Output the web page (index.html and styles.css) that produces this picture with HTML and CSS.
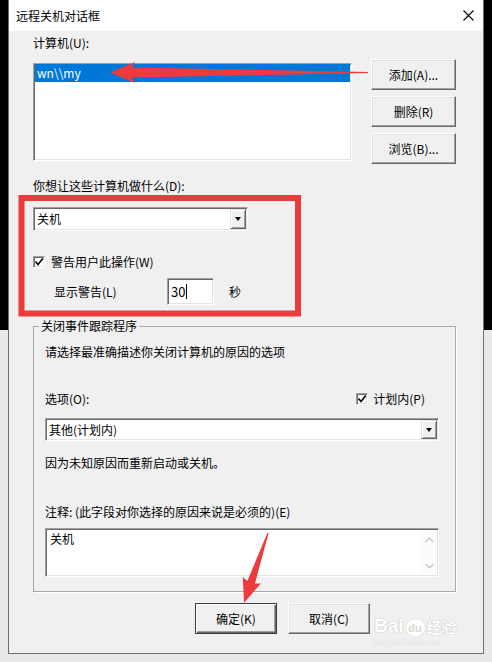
FILE: index.html
```html
<!DOCTYPE html>
<html lang="zh-CN">
<head>
    <meta charset="UTF-8">
    <title>远程关机对话框</title>
    <link rel="stylesheet" href="styles.css">
</head>
<body>
    <div class="dialog">
        <div class="titlebar">
            <span class="title">远程关机对话框</span>
            <svg class="close" width="11" height="11" viewBox="0 0 11 11">
                <path d="M0.5 0.5 L10.5 10.5 M10.5 0.5 L0.5 10.5" stroke="#000" stroke-width="1.1" fill="none"/>
            </svg>
        </div>
        <div class="content">
            <div class="label">计算机(U):</div>
            <div class="computers">
                <div class="listbox sunken">
                    <div class="list-item selected">wn\\my</div>
                </div>
                <div class="side-buttons">
                    <button class="btn">添加(A)...</button>
                    <button class="btn">删除(R)</button>
                    <button class="btn">浏览(B)...</button>
                </div>
            </div>

            <div class="label label-action">你想让这些计算机做什么(D):</div>
            <div class="combo combo-action sunken">
                <span class="combo-text">关机</span>
                <span class="combo-btn"><i class="tri"></i></span>
            </div>
            <div class="check-row warn-row">
                <span class="checkbox sunken">
                    <svg width="10" height="10" viewBox="0 0 10 10"><path d="M1.5 4.5 L4 7.5 L8.8 1.5" stroke="#000" stroke-width="1.6" fill="none"/></svg>
                </span>
                <span>警告用户此操作(W)</span>
            </div>
            <div class="timeout-row">
                <span class="timeout-label">显示警告(L)</span>
                <span class="textbox sunken">30<span class="caret"></span></span>
                <span class="unit">秒</span>
            </div>

            <div class="group">
                <span class="group-title">关闭事件跟踪程序</span>
                <div class="group-hint">请选择最准确描述你关闭计算机的原因的选项</div>
                <div class="option-row">
                    <span>选项(O):</span>
                    <span class="check-row planned">
                        <span class="checkbox sunken">
                            <svg width="10" height="10" viewBox="0 0 10 10"><path d="M1.5 4.5 L4 7.5 L8.8 1.5" stroke="#000" stroke-width="1.6" fill="none"/></svg>
                        </span>
                        <span>计划内(P)</span>
                    </span>
                </div>
                <div class="combo combo-reason sunken">
                    <span class="combo-text">其他(计划内)</span>
                    <span class="combo-btn"><i class="tri"></i></span>
                </div>
                <div class="reason-desc">因为未知原因而重新启动或关机。</div>
                <div class="comment-label">注释: (此字段对你选择的原因来说是必须的)(E)</div>
                <div class="memo sunken">
                    <span class="memo-text">关机</span>
                    <span class="memo-scroll">
                        <svg width="9" height="6" viewBox="0 0 9 6"><path d="M0.5 5 L4.5 1 L8.5 5" stroke="#c4c4c4" stroke-width="1.2" fill="none"/></svg>
                        <svg width="9" height="6" viewBox="0 0 9 6"><path d="M0.5 1 L4.5 5 L8.5 1" stroke="#c4c4c4" stroke-width="1.2" fill="none"/></svg>
                    </span>
                </div>
            </div>

            <div class="footer">
                <button class="btn btn-default">确定(K)</button>
                <button class="btn btn-cancel">取消(C)</button>
            </div>
        </div>
    </div>

    <!-- red annotations drawn over the screenshot -->
    <svg class="annotations" width="492" height="662" viewBox="0 0 492 662">
        <rect x="21.5" y="198" width="276.5" height="115.5" fill="none" stroke="#ec3b3d" stroke-width="6"/>
        <polygon transform="translate(368 72.5) rotate(180)" fill="#ec3b3d"
            points="0,-0.6 236,-5 233,-10.5 258,0 233,10.5 236,5 0,0.6"/>
        <polygon transform="translate(268 533) rotate(108.9)" fill="#ec3b3d"
            points="0,-0.6 52,-4 50,-9.5 74,0 50,9.5 52,4 0,0.6"/>
    </svg>

    <div class="watermark">
        <div class="wm-main">
            <span class="wm-bai">Bai</span>
            <span class="wm-paw">du</span>
            <span class="wm-jy">经验</span>
        </div>
        <div class="wm-url">jingyan.baidu.com</div>
    </div>
</body>
</html>
```

FILE: styles.css
```css
body {
    margin: 0;
    width: 492px;
    height: 662px;
    overflow: hidden;
    position: relative;
    background: linear-gradient(#000 0 330px, #e8e8e8 330px);
    font-family: "Noto Sans CJK SC", "Noto Sans", sans-serif;
    font-size: 12px;
    line-height: 16px;
    color: #000;
}
.dialog {
    margin-left: 8px;
    width: 476px;
    height: 654px;
    box-sizing: border-box;
    background: #f0f0f0;
    border: 1px solid #6f6f6f;
    border-top: none;
    display: flex;
    flex-direction: column;
}
.titlebar {
    height: 31px;
    background: #fff;
    display: flex;
    align-items: center;
    justify-content: space-between;
    padding: 0 9px 0 7px;
}
.close {
    display: block;
}
.content {
    padding: 4px 0 0 24px;
}

/* classic sunken edge */
.sunken {
    box-sizing: border-box;
    background: #fff;
    border: 1px solid;
    border-color: #a0a0a0 #fff #fff #a0a0a0;
    box-shadow: inset 1px 1px 0 #696969, inset -1px -1px 0 #e3e3e3;
}

.computers {
    display: flex;
    margin-top: 8px;
}
.listbox {
    width: 319px;
    height: 98px;
    margin-top: 4px;
    padding: 0 1px 0 1px;
}
.list-item {
    height: 18px;
    line-height: 18px;
    padding-left: 2px;
}
.list-item.selected {
    background: #0078d7;
    color: #fff;
}
.side-buttons {
    margin-left: 19px;
    display: flex;
    flex-direction: column;
    gap: 6px;
}
.btn {
    width: 85px;
    height: 31px;
    box-sizing: border-box;
    padding: 0;
    font: inherit;
    color: #000;
    background: #f0f0f0;
    border: 1px solid;
    border-color: #fff #696969 #696969 #fff;
    box-shadow: inset -1px -1px 0 #a0a0a0, inset 1px 1px 0 #e3e3e3;
}
.btn-default {
    border: 1px solid #3c3c3c;
    box-shadow: inset 1px 1px 0 #fff, inset -1px -1px 0 #696969, inset -2px -2px 0 #a0a0a0;
}

.label-action {
    margin-top: 14px;
}
.combo {
    display: flex;
    align-items: stretch;
    padding: 1px;
}
.combo-action {
    margin-top: 13px;
    width: 215px;
    height: 24px;
}
.combo-text {
    flex: 1;
    padding-left: 2px;
    line-height: 20px;
}
.combo-btn {
    width: 16px;
    box-sizing: border-box;
    background: #f0f0f0;
    border: 1px solid;
    border-color: #e3e3e3 #696969 #696969 #e3e3e3;
    box-shadow: inset 1px 1px 0 #fff, inset -1px -1px 0 #a0a0a0;
    display: flex;
    align-items: center;
    justify-content: center;
}
.tri {
    width: 0;
    height: 0;
    border-left: 3.5px solid transparent;
    border-right: 3.5px solid transparent;
    border-top: 4px solid #000;
}

.check-row {
    display: flex;
    align-items: center;
}
.checkbox {
    width: 12px;
    height: 12px;
    display: flex;
    align-items: center;
    justify-content: center;
}
.warn-row {
    margin-top: 23px;
    height: 16px;
    gap: 6px;
}
.timeout-row {
    margin-top: 8px;
    height: 27px;
    display: flex;
    align-items: center;
}
.timeout-label {
    width: 113px;
    padding-left: 21px;
}
.textbox {
    width: 47px;
    height: 27px;
    padding-left: 3px;
    display: flex;
    align-items: center;
    font-size: 13px;
}
.caret {
    width: 1px;
    height: 15px;
    background: #000;
    margin-left: 1px;
}
.unit {
    margin-left: 15px;
}

.group {
    margin-top: 21px;
    width: 423px;
    box-sizing: border-box;
    border: 1px solid #a9a9a9;
    box-shadow: 1px 1px 0 #fff;
    padding: 0 16px 14px 11px;
}
.group-title {
    display: block;
    width: fit-content;
    margin: -9px 0 0 -6px;
    padding: 0 2px;
    background: #f0f0f0;
}
.group-hint {
    margin-top: 10px;
}
.option-row {
    margin-top: 31px;
    height: 16px;
    display: flex;
    align-items: center;
    justify-content: space-between;
}
.planned {
    gap: 5px;
    margin-right: 14px;
}
.combo-reason {
    margin-top: 11px;
    height: 23px;
}
.combo-reason .combo-text {
    line-height: 19px;
}
.reason-desc {
    margin-top: 14px;
}
.comment-label {
    margin-top: 33px;
}
.memo {
    margin-top: 8px;
    height: 49px;
    display: flex;
    padding: 2px 1px 2px 4px;
}
.memo-text {
    flex: 1;
}
.memo-scroll {
    width: 16px;
    display: flex;
    flex-direction: column;
    align-items: center;
    justify-content: space-between;
    padding: 6px 0 5px;
    background: #fcfcfc;
}

.footer {
    margin-top: 11px;
    padding-left: 162px;
    display: flex;
    gap: 11px;
}
.footer .btn {
    width: 82px;
}

.annotations {
    position: absolute;
    left: 0;
    top: 0;
    pointer-events: none;
}

.watermark {
    position: absolute;
    left: 374px;
    top: 606px;
    color: #fff;
    text-shadow: 0 0 1px #bdbdbd, 0 0 1px #bdbdbd;
    pointer-events: none;
}
.wm-main {
    display: flex;
    align-items: flex-end;
    height: 30px;
}
.wm-bai {
    font-family: "Liberation Sans", sans-serif;
    font-weight: bold;
    font-size: 19px;
    line-height: 20px;
}
.wm-paw {
    width: 19px;
    height: 17px;
    margin: 0 2px;
    border-radius: 50% 50% 45% 45%;
    background: #fff;
    box-shadow: 0 0 1px #bdbdbd;
    color: #d8d8d8;
    text-shadow: none;
    font-family: "Liberation Sans", sans-serif;
    font-weight: bold;
    font-size: 11px;
    line-height: 18px;
    text-align: center;
}
.wm-jy {
    font-size: 15px;
    font-weight: bold;
    line-height: 18px;
}
.wm-url {
    font-family: "Liberation Serif", serif;
    font-size: 9px;
    line-height: 10px;
    color: #f4f4f4;
    text-shadow: 0 0 1px #d0d0d0;
    margin-top: 1px;
}
```
